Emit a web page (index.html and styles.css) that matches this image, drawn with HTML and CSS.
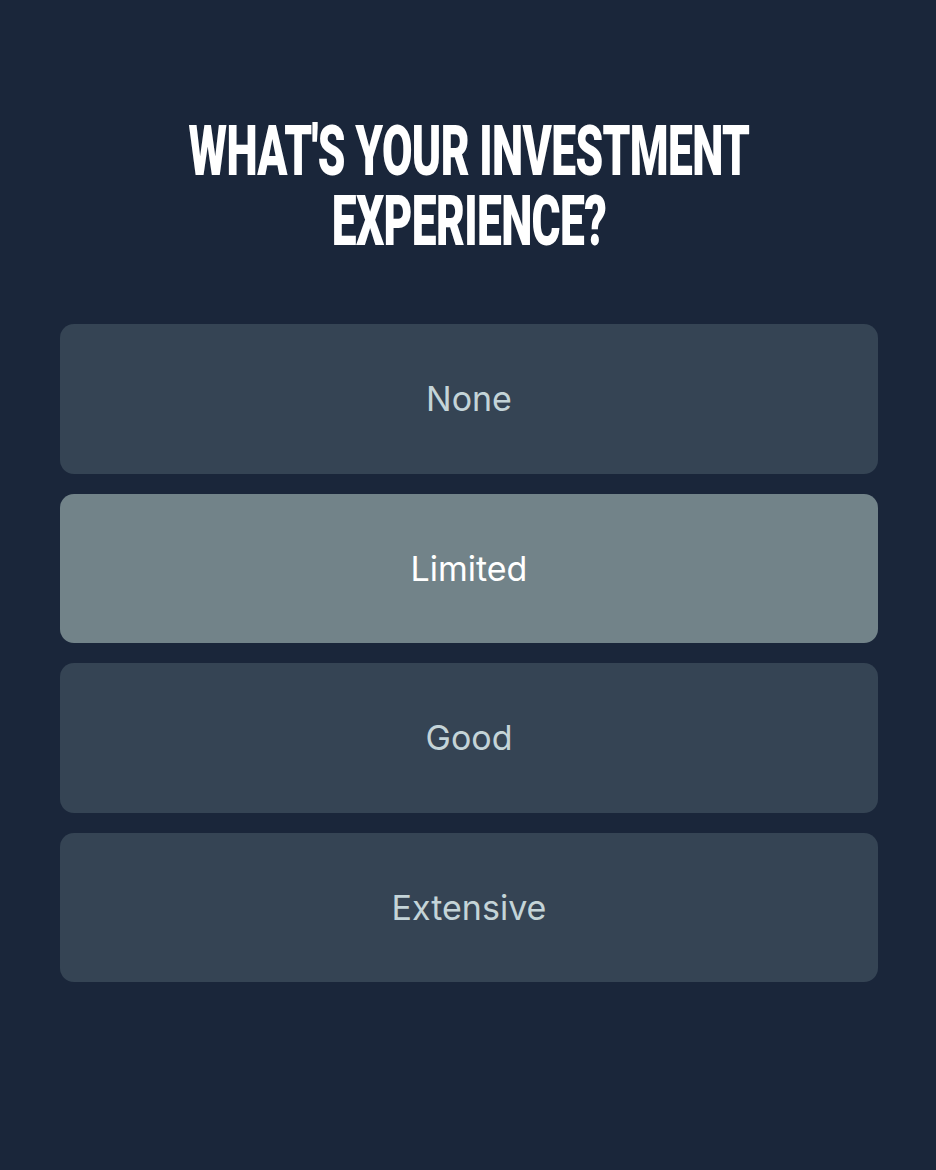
FILE: index.html
```html
<!DOCTYPE html>
<html>
<head>
	<title>Investment experience</title>
	<meta name="viewport" content="width=device-width,initial-scale=1">
	<link rel="stylesheet" href="styles.css">
</head>
<body>
	<div class="container">
		<h1 class="title"><span>WHAT'S YOUR INVESTMENT</span><span>EXPERIENCE?</span></h1>
		<div class="options">
			<button class="option">None</button>
			<button class="option selected">Limited</button>
			<button class="option">Good</button>
			<button class="option">Extensive</button>
		</div>
	</div>
</body>
</html>
```

FILE: styles.css
```css
*{
	box-sizing: border-box;
	padding: 0;
	margin: 0;
}

body{
	background-color: #1a263a;
}

.container{
	width: 100vw;
	height: 100vh;
	padding: 116px 58px 0 60px;
	display: flex;
	flex-direction: column;
	align-items: center;
}

.title{
	display: flex;
	flex-direction: column;
	align-items: center;
	color: #fff;
	font-family: Roboto, sans-serif;
	font-weight: 900;
	font-size: 70px;
	line-height: 70px;
	letter-spacing: -1px;
	transform: scaleX(0.633);
	white-space: nowrap;
	margin-bottom: 68px;
}

.options{
	width: 100%;
	display: flex;
	flex-direction: column;
	gap: 20px;
}

.option{
	height: 149.5px;
	border: none;
	outline: none;
	border-radius: 14px;
	background-color: #354454;
	color: #c4d4d8;
	font-family: Inter, sans-serif;
	font-size: 34px;
	cursor: pointer;
}
.option.selected{
	background-color: #728389;
	color: #fff;
}
```
